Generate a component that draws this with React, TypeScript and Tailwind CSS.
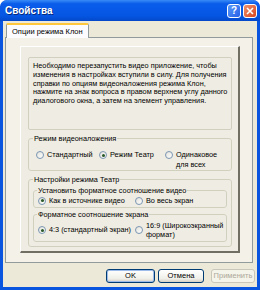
function Radio({ checked }: { checked?: boolean }) {
  return (
    <span className="w-[8px] h-[8px] shrink-0 rounded-full border border-[#7B96B2] bg-[linear-gradient(135deg,#E2E1DA,#FFFFFF)] flex items-center justify-center">
      {checked && <span className="w-[3px] h-[3px] rounded-full bg-[#2A5A2A]" />}
    </span>
  );
}

function Option({ checked, children, className = '', align = 'center' }: { checked?: boolean; children: React.ReactNode; className?: string; align?: 'center' | 'start' }) {
  return (
    <div className={`flex gap-[3px] ${align === 'start' ? 'items-start' : 'items-center'} ${className}`}>
      <span className={align === 'start' ? 'mt-[1px]' : ''}>
        <Radio checked={checked} />
      </span>
      <span className="leading-[9.5px] whitespace-nowrap">{children}</span>
    </div>
  );
}

function Button({ children, width, primary, disabled }: { children: React.ReactNode; width: string; primary?: boolean; disabled?: boolean }) {
  return (
    <div
      className={`${width} h-[14px] rounded-[3px] border flex items-center justify-center text-[7.5px] ${
        disabled
          ? 'border-[#C9C7BA] bg-[#F5F4EA] text-[#ACA899]'
          : 'border-[#003C74] bg-[linear-gradient(#FFFFFF,#F0F0EA_70%,#D6D0C5)] text-black'
      } ${primary ? 'shadow-[inset_0_0_0_1px_#9DBCE9]' : ''}`}
    >
      {children}
    </div>
  );
}

export default function App() {
  return (
    <div className="w-[260px] h-[290px] rounded-t-[7px] bg-[#0A55E0] flex flex-col font-['Liberation_Sans',Arial,sans-serif] text-black overflow-hidden">
      {/* title bar */}
      <div className="h-[21px] shrink-0 rounded-t-[7px] bg-[linear-gradient(#3A8CF8,#0A5CEA_18%,#0556E3_75%,#0448C9)] flex items-center justify-between pl-[5px] pr-[3px]">
        <span className="text-white font-bold text-[10px] [text-shadow:1px_1px_0_#0A2A7A]">Свойства</span>
        <div className="flex gap-[2px]">
          <div className="w-[14px] h-[14px] rounded-[3px] border border-white bg-[linear-gradient(135deg,#5A9BFA,#2660E8)] flex items-center justify-center text-white font-bold text-[10px] leading-none">?</div>
          <div className="w-[14px] h-[14px] rounded-[3px] border border-white bg-[linear-gradient(135deg,#F0936E,#D8451E)] flex items-center justify-center">
            <svg width="8" height="8" viewBox="0 0 8 8">
              <path d="M1 1 L7 7 M7 1 L1 7" stroke="white" strokeWidth="1.6" />
            </svg>
          </div>
        </div>
      </div>

      {/* body */}
      <div className="flex-1 mx-[3px] mb-[3px] bg-[#ECE9D8] flex flex-col text-[7.3px]">
        {/* tab */}
        <div className="pl-[3px] pt-[2px] flex">
          <div className="relative z-10 -mb-px h-[15px] px-[5px] flex items-center bg-[#FCFCFE] border border-[#919B9C] border-b-0 border-t-2 border-t-[#FFC83C] rounded-t-[2px] text-[7.5px]">
            Опции режима Клон
          </div>
        </div>

        {/* panel */}
        <div className="ml-[2px] w-[248px] h-[226px] border border-[#919B9C] bg-[#F3F1E8]">
          <div className="ml-[14px] mt-[8px] w-[220px] h-[207px] border-t border-l border-white border-r-2 border-b-2 border-r-[#716F64] border-b-[#716F64] bg-[#EFEDE3] px-[7px] pt-[10px]">
            {/* info */}
            <div className="w-[204px] h-[73px] border border-[#D0CFC0] rounded-[2px] px-[4px] pt-[4px] leading-[8.8px] whitespace-nowrap">
              Необходимо перезапустить видео приложение, чтобы
              <br />
              изменения в настройках вступили в силу. Для получения
              <br />
              справки по опциям видеоналожения режима Клон,
              <br />
              нажмите на знак вопроса в правом верхнем углу данного
              <br />
              диалогового окна, а затем на элемент управления.
            </div>

            {/* group 1 */}
            <fieldset className="mt-[4px] w-[204px] border border-[#D0D0BF] rounded-[3px] pl-[5px] pt-[7px] pb-[1px]">
              <legend className="px-px -ml-px leading-[9px]">Режим видеоналожения</legend>
              <div className="flex items-start pl-[2px]">
                <Option checked={false} className="w-[63px]" align="start">Стандартный</Option>
                <Option checked className="w-[66px]" align="start">Режим Театр</Option>
                <Option align="start">
                  Одинаковое
                  <br />
                  для всех
                </Option>
              </div>
            </fieldset>

            {/* group 2 */}
            <fieldset className="mt-[4px] w-[204px] border border-[#D0D0BF] rounded-[3px] pl-[5px] pb-[4px]">
              <legend className="px-px -ml-px leading-[9px]">Настройки режима Театр</legend>
              <fieldset className="mt-[2px] -ml-[1px] w-[194px] border border-[#D0D0BF] rounded-[3px] pl-[4px] pt-[1px] pb-[1px]">
                <legend className="px-px -ml-px leading-[9px]">Установить форматное соотношение видео</legend>
                <div className="flex items-center">
                  <Option checked className="w-[97px]">Как в источнике видео</Option>
                  <Option>Во весь экран</Option>
                </div>
              </fieldset>
              <fieldset className="mt-[2px] -ml-[1px] w-[194px] border border-[#D0D0BF] rounded-[3px] pl-[4px] pt-[2px] pb-[1px]">
                <legend className="px-px -ml-px leading-[9px]">Форматное соотношение экрана</legend>
                <div className="flex items-center">
                  <Option checked className="w-[97px]">4:3 (стандартный экран)</Option>
                  <Option>
                    16:9 (Широкоэкранный
                    <br />
                    формат)
                  </Option>
                </div>
              </fieldset>
            </fieldset>
          </div>
        </div>

        {/* buttons */}
        <div className="flex justify-end pr-[2px] mt-[6px]">
          <Button width="w-[49px]" primary>OK</Button>
          <div className="w-[3px]" />
          <Button width="w-[46px]">Отмена</Button>
          <div className="w-[7px]" />
          <Button width="w-[44px]" disabled>Применить</Button>
        </div>
      </div>
    </div>
  );
}
